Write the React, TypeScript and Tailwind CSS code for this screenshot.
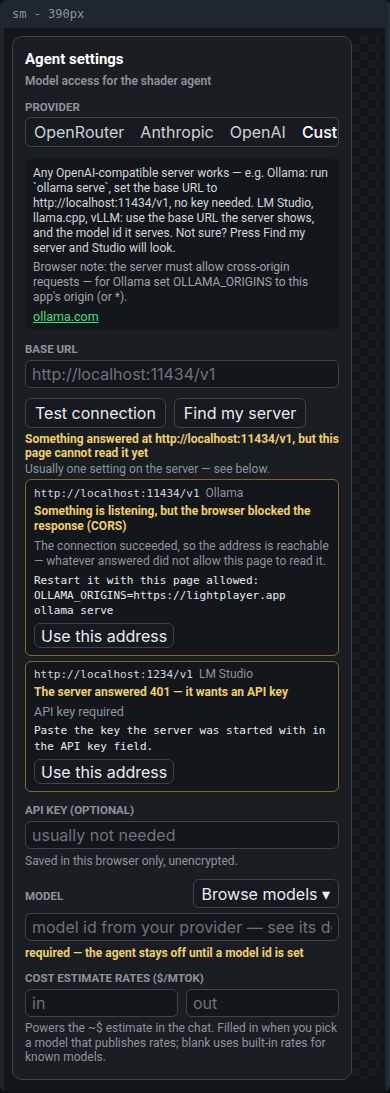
import React from "react";

const sans = { fontFamily: "Roboto, 'Liberation Sans', Arial, sans-serif" };
const ctrl = { fontFamily: "Inter, 'Noto Sans', 'Liberation Sans', sans-serif" };
const mono = { fontFamily: "'DejaVu Sans Mono', 'Liberation Mono', monospace" };

function Label({ children, className = "" }: { children: React.ReactNode; className?: string }) {
  return (
    <div className={"text-[11.5px] leading-[14px] font-bold uppercase text-[#8b949e] " + className}>{children}</div>
  );
}

function Input({ placeholder, className = "" }: { placeholder: string; className?: string }) {
  return (
    <input
      placeholder={placeholder}
      className={
        "h-[28px] rounded-[6px] border border-[#3b424b] bg-[#13171b] px-[6px] text-[16px] text-[#e6edf3] placeholder:text-[#6b737c] outline-none " +
        className
      }
      style={ctrl}
    />
  );
}

function SmallBtn({ children }: { children: React.ReactNode }) {
  return (
    <button
      className="h-[25px] self-start rounded-[6px] border border-[#3b424b] bg-[#161a1f] px-[6px] text-[16px] leading-[20px] text-[#e6edf3]"
      style={ctrl}
    >
      {children}
    </button>
  );
}

export default function App() {
  return (
    <div className="min-h-[1093px] bg-[#0e1215]" style={sans}>
      <div className="flex h-[1091px] w-[390px] flex-col rounded-[6px] border-r-2 border-[#262e37] bg-[#1f262d]">
        <div className="flex h-[28px] shrink-0 items-center px-3 text-[12px] text-[#8b949e]" style={mono}>
          sm - 390px
        </div>
        <div className="ml-[4px] mr-[3px] flex min-h-0 flex-1 items-start bg-[#13171b] pb-[9px] pl-[8px] pt-[8px]">
          <div className="flex w-[340px] shrink-0 flex-col rounded-[10px] border border-[#3b424b] bg-[#1a1e23] px-3 pb-[14px] pt-[12px]">
            <div className="text-[15px] font-bold leading-[20px] text-white">Agent settings</div>
            <div className="mt-[5px] text-[12px] font-semibold leading-[14px] text-[#8b949e]">
              Model access for the shader agent
            </div>

            <Label className="mt-[12px]">Provider</Label>
            <div
              className="mt-[3px] flex h-[30px] items-center overflow-hidden rounded-[6px] border border-[#3b424b] bg-[#171b20] text-[16px]"
              style={ctrl}
            >
              <span className="shrink-0 px-[8px] text-[#c9d1d9]">OpenRouter</span>
              <span className="shrink-0 px-[8px] text-[#c9d1d9]">Anthropic</span>
              <span className="shrink-0 px-[8px] text-[#c9d1d9]">OpenAI</span>
              <span className="shrink-0 px-[8px] font-medium text-white">Custom</span>
            </div>

            <div className="mt-[12px] rounded-[6px] bg-[#13171b] pb-[5px] pl-[8px] pr-[3px] pt-[7px] text-[12px] leading-[15px]">
              <p className="text-[#d1d6dc]">
                Any OpenAI-compatible server works — e.g. Ollama: run `ollama serve`, set the base URL to
                http://localhost:11434/v1, no key needed. LM Studio, llama.cpp, vLLM: use the base URL the server
                shows, and the model id it serves. Not sure? Press Find my server and Studio will look.
              </p>
              <p className="mt-[4px] text-[#9ca3ab]">
                Browser note: the server must allow cross-origin requests — for Ollama set OLLAMA_ORIGINS to this
                app's origin (or *).
              </p>
              <a className="mt-[4px] block text-[12.5px] text-[#4ade80] underline">ollama.com</a>
            </div>

            <Label className="mt-[13px]">Base URL</Label>
            <Input placeholder="http://localhost:11434/v1" className="mt-[4px]" />

            <div className="mt-[10px] flex gap-[8px]" style={ctrl}>
              <button className="h-[30px] rounded-[6px] border border-[#3b424b] bg-[#161a1f] px-[9px] text-[16px] text-[#e6edf3]">
                Test connection
              </button>
              <button className="h-[30px] rounded-[6px] border border-[#3b424b] bg-[#161a1f] px-[9px] text-[16px] text-[#e6edf3]">
                Find my server
              </button>
            </div>

            <div className="mt-[4px] text-[12px] font-bold leading-[14px] text-[#f0d06a]">
              Something answered at http://localhost:11434/v1, but this page cannot read it yet
            </div>
            <div className="mt-[2px] text-[12px] leading-[14px] text-[#8b949e]">
              Usually one setting on the server — see below.
            </div>

            <div className="mt-[3px] flex flex-col rounded-[6px] border border-[#7a682e] bg-[#13171b] px-[8px] pb-[7px] pt-[6px]">
              <div className="flex items-baseline gap-[6px] leading-[15px]">
                <span className="text-[11px] text-[#d1d6dc]" style={mono}>
                  http://localhost:11434/v1
                </span>
                <span className="text-[12px] text-[#8b949e]">Ollama</span>
              </div>
              <div className="mt-[3px] text-[12px] font-bold leading-[15px] text-[#f0d06a]">
                Something is listening, but the browser blocked the response (CORS)
              </div>
              <div className="mt-[5px] text-[12px] leading-[15px] text-[#8b949e]">
                The connection succeeded, so the address is reachable — whatever answered did not allow this page to
                read it.
              </div>
              <div className="mt-[4px] whitespace-pre text-[11px] leading-[15px] text-[#e6edf3]" style={mono}>
                {"Restart it with this page allowed:\nOLLAMA_ORIGINS=https://lightplayer.app\nollama serve"}
              </div>
              <div className="mt-[5px] flex">
                <SmallBtn>Use this address</SmallBtn>
              </div>
            </div>

            <div className="mt-[5px] flex flex-col rounded-[6px] border border-[#7a682e] bg-[#13171b] px-[8px] pb-[7px] pt-[5px]">
              <div className="flex items-baseline gap-[6px] leading-[15px]">
                <span className="text-[11px] text-[#d1d6dc]" style={mono}>
                  http://localhost:1234/v1
                </span>
                <span className="text-[12px] text-[#8b949e]">LM Studio</span>
              </div>
              <div className="mt-[3px] text-[12px] font-bold leading-[15px] text-[#f0d06a]">
                The server answered 401 — it wants an API key
              </div>
              <div className="mt-[4px] text-[12.5px] leading-[15px] text-[#8b949e]">API key required</div>
              <div className="mt-[4px] text-[11px] leading-[15.5px] text-[#e6edf3]" style={mono}>
                Paste the key the server was started with in the API key field.
              </div>
              <div className="mt-[5px] flex">
                <SmallBtn>Use this address</SmallBtn>
              </div>
            </div>

            <Label className="mt-[11px]">API key (optional)</Label>
            <Input placeholder="usually not needed" className="mt-[4px]" />
            <div className="mt-[5px] text-[12px] leading-[14px] text-[#8b949e]">
              Saved in this browser only, unencrypted.
            </div>

            <div className="mt-[11px] flex items-center justify-between">
              <Label className="mt-[4px]">Model</Label>
              <button
                className="h-[29px] rounded-[6px] border border-[#3b424b] bg-[#161a1f] px-[8px] text-[16px] text-[#e6edf3]"
                style={ctrl}
              >
                Browse models ▾
              </button>
            </div>
            <Input placeholder="model id from your provider — see its docs" className="mt-[5px]" />
            <div className="mt-[5px] text-[12px] font-bold leading-[14px] text-[#f0d06a]">
              required — the agent stays off until a model id is set
            </div>

            <Label className="mt-[11px]">Cost estimate rates ($/MTok)</Label>
            <div className="mt-[4px] flex gap-[8px]">
              <Input placeholder="in" className="w-0 flex-1" />
              <Input placeholder="out" className="w-0 flex-1" />
            </div>
            <div className="mt-[4px] text-[12px] leading-[14.5px] text-[#8b949e]">
              Powers the ~$ estimate in the chat. Filled in when you pick a model that publishes rates; blank uses
              built-in rates for known models.
            </div>
          </div>
          <div className="h-[1043px] w-[26px] bg-[conic-gradient(#191d22_25%,#121519_0_50%,#191d22_0_75%,#121519_0)] bg-[length:16px_16px]" />
        </div>
      </div>
    </div>
  );
}
